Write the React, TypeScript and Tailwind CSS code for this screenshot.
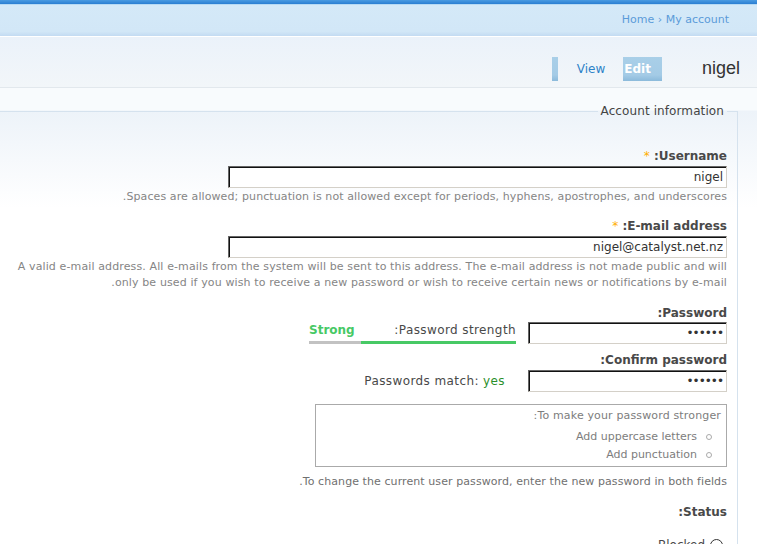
import React from "react";

const font = "font-['DejaVu_Sans','Verdana',sans-serif]";
const inputCls =
  "block h-[22px] bg-white px-[3px] text-[12px] text-[#333] outline-none border border-t-[#666] border-l-[#666] border-b-[#d4d0c8] border-r-[#d4d0c8] shadow-[inset_1px_1px_0_#111] " +
  font;

function Required() {
  return <span className="text-[#ffae00] font-normal">*</span>;
}

export default function App() {
  return (
    <div dir="rtl" className={`w-[757px] h-[544px] overflow-hidden bg-white text-[12px] text-[#494949] ${font}`}>
      {/* top strip + breadcrumb */}
      <div className="h-[4px] bg-[linear-gradient(to_bottom,#4a9be2,#2a7ed2)]" />
      <div className="h-px bg-[#b7daf4]" />
      <div className="h-[31px] flex items-center pr-[28px] bg-[linear-gradient(to_bottom,#d4e9f8,#d2e7f7_85%,#c3dbf2)] text-[11px] text-[#5b9bd9]">
        <div dir="ltr">
          <a href="#">Home</a> › <a href="#">My account</a>
        </div>
      </div>
      <div className="h-px bg-white" />

      {/* title + tabs */}
      <div className="h-[50px] flex items-start pt-[20px] pr-[17px] bg-[linear-gradient(to_bottom,#ebf2fa,#f2f6f9)]">
        <h2 className="font-['Liberation_Sans',Arial,sans-serif] text-[18px] leading-[22px] text-[#333]">nigel</h2>
        <ul className="flex items-start mr-[40px]">
          <li className="h-[24px] bg-[linear-gradient(to_bottom,#a9cfe8,#a4cbe6_75%,#8bbadb)] pl-[1px] pr-[11px] text-white font-bold leading-[24px]">
            Edit
          </li>
          <li className="flex items-start mr-[18px]">
            <a href="#" className="text-[#2e83c8] leading-[24px]">View</a>
            <span className="w-[6px] h-[24px] mr-[19px] bg-[linear-gradient(to_bottom,#a9cfe8,#a4cbe6_75%,#8bbadb)]" />
          </li>
        </ul>
      </div>
      <div className="h-px bg-[#e2e8ed]" />

      {/* form area */}
      <div className="pt-[15px] bg-[linear-gradient(to_bottom,#f8fbfd_0,#f8fbfd_22px,#edf3f9_23px,#ffffff_120px)]">
        <fieldset className="mr-[19px] border border-l-0 border-b-0 border-[#d5e2ee] pr-[10px] pt-[29px]">
          <legend className="px-[3px] leading-[16px] text-[12px] tracking-[0.1px] text-[#444]">Account information</legend>

          {/* username */}
          <div>
            <label className="block font-bold leading-[16px]">
              Username: <Required />
            </label>
            <input className={`${inputCls} w-[499px] mt-[2px]`} defaultValue="nigel" readOnly />
            <div className="mt-px text-[11px] leading-[16px] tracking-[0.1px] text-[#858585]">
              Spaces are allowed; punctuation is not allowed except for periods, hyphens, apostrophes, and underscores.
            </div>
          </div>

          {/* email */}
          <div className="mt-[13px]">
            <label className="block font-bold leading-[16px]">
              E-mail address: <Required />
            </label>
            <input className={`${inputCls} w-[499px] mt-[2px]`} defaultValue="nigel@catalyst.net.nz" readOnly />
            <div className="mt-px text-[11px] leading-[16px] tracking-[0.12px] text-[#858585]">
              A valid e-mail address. All e-mails from the system will be sent to this address. The e-mail address is not made public and will
              <br />
              only be used if you wish to receive a new password or wish to receive certain news or notifications by e-mail.
            </div>
          </div>

          {/* password */}
          <div className="mt-[14px]">
            <label className="block font-bold leading-[16px]">Password:</label>
            <div className="flex items-start mt-px">
              <input type="password" className={`${inputCls} w-[199px] tracking-[-1px]`} defaultValue="secret" readOnly />
              <div className="w-[207px] mr-[12px]">
                <div className="flex justify-between leading-[16px] tracking-[0.4px]">
                  <span>Password strength:</span>
                  <span className="font-bold tracking-normal text-[#47c965]">Strong</span>
                </div>
                <div className="mt-[3px] h-[3px] bg-[#c2c2c2] flex">
                  <div className="h-full bg-[#47c965]" style={{ width: "75%" }} />
                </div>
              </div>
            </div>
          </div>

          {/* confirm */}
          <div className="mt-[8px]">
            <label className="block font-bold leading-[16px]">Confirm password:</label>
            <div className="flex items-center mt-[2px]">
              <input type="password" className={`${inputCls} w-[199px] tracking-[-1px]`} defaultValue="secret" readOnly />
              <div className="w-[207px] mr-[12px] pr-[11px] leading-[16px] tracking-[0.4px]">
                Passwords match: <span className="text-[#2b8f2b]">yes</span>
              </div>
            </div>
          </div>

          {/* suggestions */}
          <div className="mt-[12px] w-[412px] border border-[#aaa] pt-[3px] pb-[2px] text-[11px] text-[#7d7d7d]">
            <p className="pr-[5px] leading-[16px] tracking-[0.15px]">To make your password stronger:</p>
            <ul className="mt-[4px] pr-[14px]">
              {["Add uppercase letters", "Add punctuation"].map((t) => (
                <li key={t} className="flex items-center leading-[18px]">
                  <span className="w-[6px] h-[6px] rounded-full border border-[#aaa] ml-[9px]" />
                  {t}
                </li>
              ))}
            </ul>
          </div>

          <div className="mt-[7px] text-[11px] leading-[16px] tracking-[0.08px] text-[#707070]">
            To change the current user password, enter the new password in both fields.
          </div>

          {/* status */}
          <div className="mt-[14px]">
            <label className="block font-bold leading-[16px]">Status:</label>
            <div className="flex items-center mt-[16px] pr-[4px]">
              <span className="w-[13px] h-[13px] rounded-full border border-[#333] bg-white" />
              <span className="mr-[5px]">Blocked</span>
            </div>
          </div>
        </fieldset>
      </div>
    </div>
  );
}
